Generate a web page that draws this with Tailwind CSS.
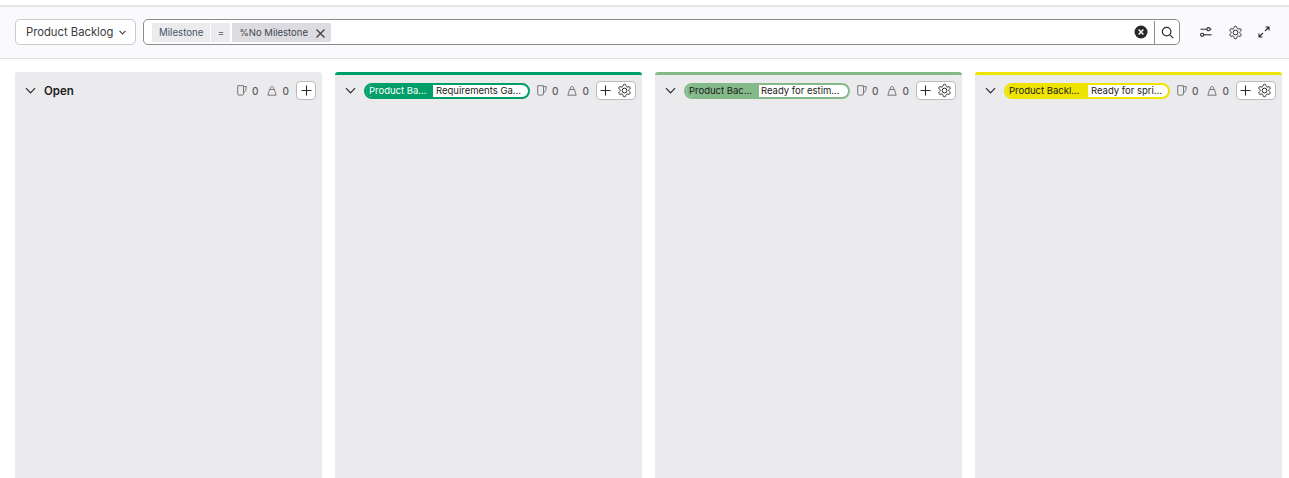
<!DOCTYPE html>
<html lang="en">
<head>
  <meta charset="UTF-8" />
  <title>Backlog board</title>
  <script src="https://cdn.jsdelivr.net/npm/@tailwindcss/browser@4"></script>
</head>
<body class="h-[478px] overflow-hidden bg-white font-['Inter',sans-serif] text-[#2a2a2e]">
  <!-- Toolbar -->
  <div class="mt-[5px] h-[54px] border-t-2 border-[#e3e3e8] bg-[#fafafc]">
    <div class="flex items-center h-[52px] px-[15px] pb-px border-b border-[#dfdfe3]">
      <button class="flex items-center w-[121px] h-[26px] pl-[10px] gap-[6px] bg-white border border-[#c9c9ce] rounded-[5px] text-[11.25px] text-[#3b3b40]">
        Product Backlog
        <svg class="w-[7px] h-[7px]" viewBox="0 0 10 10" fill="none" stroke="#3b3b40" stroke-width="1.6"><path d="M.8 2.8 5 7.2l4.2-4.4"/></svg>
      </button>
      <div class="flex items-center ml-[7px] w-[1037px] h-[26px] pt-px bg-white border border-[#8b8b90] rounded-[5px] pl-2">
        <span class="flex items-center h-[19px] px-[7px] pt-px bg-[#ebebee] rounded-l-[2px] text-[9.7px] text-[#4a5568]">Milestone</span>
        <span class="flex items-center justify-center h-[19px] w-[19px] pt-px ml-px bg-[#ebebee] text-[9.7px] text-[#4a5568]">=</span>
        <span class="flex items-center h-[19px] pl-[7px] pr-[4.5px] pt-px ml-[2px] gap-[7.5px] bg-[#dcdce0] rounded-r-[2px] text-[9.5px] text-[#3f4550]">
          %No Milestone
          <svg class="w-[11px] h-[11px]" viewBox="0 0 11 11" fill="none" stroke="#3b3b40" stroke-width="1.2"><path d="M1.5 1.5l8 8M9.5 1.5l-8 8"/></svg>
        </span>
        <svg class="ml-auto -mt-px w-[14px] h-[14px]" viewBox="0 0 14 14"><circle cx="7" cy="7" r="6.5" fill="#26262b"/><path d="M4.6 4.6l4.8 4.8M9.4 4.6l-4.8 4.8" stroke="#fff" stroke-width="1.4"/></svg>
        <div class="flex items-center justify-center ml-[6px] -mt-px w-[25px] h-full border-l border-[#8b8b90]">
          <svg class="w-[13px] h-[13px]" viewBox="0 0 13 13" fill="none" stroke="#2a2a2e" stroke-width="1.2"><circle cx="5.6" cy="5.6" r="4.3"/><path d="M8.8 8.8l3.4 3.4"/></svg>
        </div>
      </div>
      <div class="flex items-center ml-[20px] gap-[16px]">
        <svg class="w-[12px] h-[12px]" viewBox="0 0 12 12" fill="none" stroke="#2a2a2e" stroke-width="1.1"><circle cx="8.5" cy="3.2" r="1.6"/><path d="M0.5 3.2h6.4M10.1 3.2h1.4"/><circle cx="2.2" cy="8.8" r="1.6"/><path d="M3.8 8.8h7.7"/></svg>
        <svg class="w-[15px] h-[15px]" viewBox="0 0 24 24" fill="none" stroke="#2a2a2e" stroke-width="1.6" stroke-linejoin="round"><path d="M12.22 2h-.44a2 2 0 0 0-2 2v.18a2 2 0 0 1-1 1.73l-.43.25a2 2 0 0 1-2 0l-.15-.08a2 2 0 0 0-2.73.73l-.22.38a2 2 0 0 0 .73 2.73l.15.1a2 2 0 0 1 1 1.72v.51a2 2 0 0 1-1 1.74l-.15.09a2 2 0 0 0-.73 2.73l.22.38a2 2 0 0 0 2.73.73l.15-.08a2 2 0 0 1 2 0l.43.25a2 2 0 0 1 1 1.73V20a2 2 0 0 0 2 2h.44a2 2 0 0 0 2-2v-.18a2 2 0 0 1 1-1.73l.43-.25a2 2 0 0 1 2 0l.15.08a2 2 0 0 0 2.73-.73l.22-.39a2 2 0 0 0-.73-2.73l-.15-.08a2 2 0 0 1-1-1.74v-.5a2 2 0 0 1 1-1.74l.15-.09a2 2 0 0 0 .73-2.73l-.22-.38a2 2 0 0 0-2.73-.73l-.15.08a2 2 0 0 1-2 0l-.43-.25a2 2 0 0 1-1-1.73V4a2 2 0 0 0-2-2z"/><circle cx="12" cy="12" r="3.8"/></svg>
        <svg class="-ml-px w-[12px] h-[12px]" viewBox="0 0 12 12" fill="none" stroke="#2a2a2e" stroke-width="1.1"><path d="M7 5l4-4M7.6 1H11v3.4M5 7l-4 4M1 7.6V11h3.4"/></svg>
      </div>
    </div>
  </div>

  <!-- Board -->
  <div class="flex gap-[13px] pl-[15px] pt-[13px]">
    <section class="w-[307px] h-[420px] bg-[#ebebed] rounded-t-[3px]">
      <div class="flex items-center h-[37px] pl-[10px] pr-[6px]">
        <svg class="w-[11px] h-[11px]" viewBox="0 0 11 11" fill="none" stroke="#2a2a2e" stroke-width="1.2"><path d="M1 3.2l4.5 4.6L10 3.2"/></svg>
        <span class="ml-[8px] pt-[3px] text-[11.5px] font-semibold text-[#1c1c20]">Open</span>
        <div class="ml-auto flex items-center">
          <svg class="w-[10px] h-[11px]" viewBox="0 0 10 11" fill="none" stroke="#77777c" stroke-width="1"><path d="M.7.7h5.8v8.2a1.2 1.2 0 0 1-1.2 1.2H1.9A1.2 1.2 0 0 1 .7 8.9zM6.5 1.6h2.9L8.6 5.5 6.5 8"/></svg>
          <span class="ml-[5px] pt-px text-[10px] font-medium text-[#5c5c62]">0</span>
          <svg class="ml-[8px] w-[10px] h-[11px]" viewBox="0 0 10 11" fill="none" stroke="#77777c" stroke-width="1"><path d="M2.6 4.5h4.8l1.8 5.7H.8zM3.2 4.5c0-4.2 3.6-4.2 3.6 0"/></svg>
          <span class="ml-[6px] pt-px text-[10px] font-medium text-[#5c5c62]">0</span>
          <div class="ml-[7px] flex items-center justify-center w-[20px] h-[19px] bg-white border border-[#b9b9be] rounded-[4px]">
            <svg class="w-[11px] h-[11px]" viewBox="0 0 11 11" stroke="#2a2a2e" stroke-width="1.1"><path d="M5.5 .5v10M.5 5.5h10"/></svg>
          </div>
        </div>
      </div>
    </section>

    <section class="w-[307px] h-[420px] bg-[#ebebed] border-t-[3px] border-[#009e68] rounded-t-[3px]">
      <div class="flex items-center h-[31px] pl-[10px] pr-[6px]">
        <svg class="w-[11px] h-[11px]" viewBox="0 0 11 11" fill="none" stroke="#2a2a2e" stroke-width="1.2"><path d="M1 3.2l4.5 4.6L10 3.2"/></svg>
        <div class="ml-[8px] flex items-center h-[16px] w-[166px] border-2 border-[#009e68] rounded-full overflow-hidden text-[9.5px] bg-white">
          <span class="flex items-center h-full w-[67px] pl-[3px] pt-px bg-[#009e68] text-white whitespace-nowrap">Product Ba...</span>
          <span class="pl-[3px] pt-px whitespace-nowrap text-[#1c1c20]">Requirements Ga...</span>
        </div>
        <div class="ml-auto flex items-center">
          <svg class="w-[10px] h-[11px]" viewBox="0 0 10 11" fill="none" stroke="#77777c" stroke-width="1"><path d="M.7.7h5.8v8.2a1.2 1.2 0 0 1-1.2 1.2H1.9A1.2 1.2 0 0 1 .7 8.9zM6.5 1.6h2.9L8.6 5.5 6.5 8"/></svg>
          <span class="ml-[5px] pt-px text-[10px] font-medium text-[#5c5c62]">0</span>
          <svg class="ml-[8px] w-[10px] h-[11px]" viewBox="0 0 10 11" fill="none" stroke="#77777c" stroke-width="1"><path d="M2.6 4.5h4.8l1.8 5.7H.8zM3.2 4.5c0-4.2 3.6-4.2 3.6 0"/></svg>
          <span class="ml-[6px] pt-px text-[10px] font-medium text-[#5c5c62]">0</span>
          <div class="ml-[7px] flex items-center justify-center gap-[6px] w-[40px] h-[19px] bg-white border border-[#b9b9be] rounded-[4px]">
            <svg class="w-[11px] h-[11px]" viewBox="0 0 11 11" stroke="#2a2a2e" stroke-width="1.1"><path d="M5.5 .5v10M.5 5.5h10"/></svg>
            <svg class="w-[15px] h-[15px]" viewBox="0 0 24 24" fill="none" stroke="#2a2a2e" stroke-width="1.6" stroke-linejoin="round"><path d="M12.22 2h-.44a2 2 0 0 0-2 2v.18a2 2 0 0 1-1 1.73l-.43.25a2 2 0 0 1-2 0l-.15-.08a2 2 0 0 0-2.73.73l-.22.38a2 2 0 0 0 .73 2.73l.15.1a2 2 0 0 1 1 1.72v.51a2 2 0 0 1-1 1.74l-.15.09a2 2 0 0 0-.73 2.73l.22.38a2 2 0 0 0 2.73.73l.15-.08a2 2 0 0 1 2 0l.43.25a2 2 0 0 1 1 1.73V20a2 2 0 0 0 2 2h.44a2 2 0 0 0 2-2v-.18a2 2 0 0 1 1-1.73l.43-.25a2 2 0 0 1 2 0l.15.08a2 2 0 0 0 2.73-.73l.22-.39a2 2 0 0 0-.73-2.73l-.15-.08a2 2 0 0 1-1-1.74v-.5a2 2 0 0 1 1-1.74l.15-.09a2 2 0 0 0 .73-2.73l-.22-.38a2 2 0 0 0-2.73-.73l-.15.08a2 2 0 0 1-2 0l-.43-.25a2 2 0 0 1-1-1.73V4a2 2 0 0 0-2-2z"/><circle cx="12" cy="12" r="3.8"/></svg>
          </div>
        </div>
      </div>
    </section>

    <section class="w-[307px] h-[420px] bg-[#ebebed] border-t-[3px] border-[#84b98a] rounded-t-[3px]">
      <div class="flex items-center h-[31px] pl-[10px] pr-[6px]">
        <svg class="w-[11px] h-[11px]" viewBox="0 0 11 11" fill="none" stroke="#2a2a2e" stroke-width="1.2"><path d="M1 3.2l4.5 4.6L10 3.2"/></svg>
        <div class="ml-[8px] flex items-center h-[16px] w-[166px] border-2 border-[#84b98a] rounded-full overflow-hidden text-[9.5px] bg-white">
          <span class="flex items-center h-full w-[73px] pl-[3px] pt-px bg-[#84b98a] text-[#1c1c20] whitespace-nowrap">Product Bac...</span>
          <span class="pl-[2px] pt-px whitespace-nowrap text-[#1c1c20]">Ready for estim...</span>
        </div>
        <div class="ml-auto flex items-center">
          <svg class="w-[10px] h-[11px]" viewBox="0 0 10 11" fill="none" stroke="#77777c" stroke-width="1"><path d="M.7.7h5.8v8.2a1.2 1.2 0 0 1-1.2 1.2H1.9A1.2 1.2 0 0 1 .7 8.9zM6.5 1.6h2.9L8.6 5.5 6.5 8"/></svg>
          <span class="ml-[5px] pt-px text-[10px] font-medium text-[#5c5c62]">0</span>
          <svg class="ml-[8px] w-[10px] h-[11px]" viewBox="0 0 10 11" fill="none" stroke="#77777c" stroke-width="1"><path d="M2.6 4.5h4.8l1.8 5.7H.8zM3.2 4.5c0-4.2 3.6-4.2 3.6 0"/></svg>
          <span class="ml-[6px] pt-px text-[10px] font-medium text-[#5c5c62]">0</span>
          <div class="ml-[7px] flex items-center justify-center gap-[6px] w-[40px] h-[19px] bg-white border border-[#b9b9be] rounded-[4px]">
            <svg class="w-[11px] h-[11px]" viewBox="0 0 11 11" stroke="#2a2a2e" stroke-width="1.1"><path d="M5.5 .5v10M.5 5.5h10"/></svg>
            <svg class="w-[15px] h-[15px]" viewBox="0 0 24 24" fill="none" stroke="#2a2a2e" stroke-width="1.6" stroke-linejoin="round"><path d="M12.22 2h-.44a2 2 0 0 0-2 2v.18a2 2 0 0 1-1 1.73l-.43.25a2 2 0 0 1-2 0l-.15-.08a2 2 0 0 0-2.73.73l-.22.38a2 2 0 0 0 .73 2.73l.15.1a2 2 0 0 1 1 1.72v.51a2 2 0 0 1-1 1.74l-.15.09a2 2 0 0 0-.73 2.73l.22.38a2 2 0 0 0 2.73.73l.15-.08a2 2 0 0 1 2 0l.43.25a2 2 0 0 1 1 1.73V20a2 2 0 0 0 2 2h.44a2 2 0 0 0 2-2v-.18a2 2 0 0 1 1-1.73l.43-.25a2 2 0 0 1 2 0l.15.08a2 2 0 0 0 2.73-.73l.22-.39a2 2 0 0 0-.73-2.73l-.15-.08a2 2 0 0 1-1-1.74v-.5a2 2 0 0 1 1-1.74l.15-.09a2 2 0 0 0 .73-2.73l-.22-.38a2 2 0 0 0-2.73-.73l-.15.08a2 2 0 0 1-2 0l-.43-.25a2 2 0 0 1-1-1.73V4a2 2 0 0 0-2-2z"/><circle cx="12" cy="12" r="3.8"/></svg>
          </div>
        </div>
      </div>
    </section>

    <section class="w-[307px] h-[420px] bg-[#ebebed] border-t-[3px] border-[#efe300] rounded-t-[3px]">
      <div class="flex items-center h-[31px] pl-[10px] pr-[6px]">
        <svg class="w-[11px] h-[11px]" viewBox="0 0 11 11" fill="none" stroke="#2a2a2e" stroke-width="1.2"><path d="M1 3.2l4.5 4.6L10 3.2"/></svg>
        <div class="ml-[8px] flex items-center h-[16px] w-[166px] border-2 border-[#efe300] rounded-full overflow-hidden text-[9.5px] bg-white">
          <span class="flex items-center h-full w-[82px] pl-[3px] pt-px bg-[#efe300] text-[#1c1c20] whitespace-nowrap">Product Backl...</span>
          <span class="pl-[3px] pt-px whitespace-nowrap text-[#1c1c20]">Ready for spri...</span>
        </div>
        <div class="ml-auto flex items-center">
          <svg class="w-[10px] h-[11px]" viewBox="0 0 10 11" fill="none" stroke="#77777c" stroke-width="1"><path d="M.7.7h5.8v8.2a1.2 1.2 0 0 1-1.2 1.2H1.9A1.2 1.2 0 0 1 .7 8.9zM6.5 1.6h2.9L8.6 5.5 6.5 8"/></svg>
          <span class="ml-[5px] pt-px text-[10px] font-medium text-[#5c5c62]">0</span>
          <svg class="ml-[8px] w-[10px] h-[11px]" viewBox="0 0 10 11" fill="none" stroke="#77777c" stroke-width="1"><path d="M2.6 4.5h4.8l1.8 5.7H.8zM3.2 4.5c0-4.2 3.6-4.2 3.6 0"/></svg>
          <span class="ml-[6px] pt-px text-[10px] font-medium text-[#5c5c62]">0</span>
          <div class="ml-[7px] flex items-center justify-center gap-[6px] w-[40px] h-[19px] bg-white border border-[#b9b9be] rounded-[4px]">
            <svg class="w-[11px] h-[11px]" viewBox="0 0 11 11" stroke="#2a2a2e" stroke-width="1.1"><path d="M5.5 .5v10M.5 5.5h10"/></svg>
            <svg class="w-[15px] h-[15px]" viewBox="0 0 24 24" fill="none" stroke="#2a2a2e" stroke-width="1.6" stroke-linejoin="round"><path d="M12.22 2h-.44a2 2 0 0 0-2 2v.18a2 2 0 0 1-1 1.73l-.43.25a2 2 0 0 1-2 0l-.15-.08a2 2 0 0 0-2.73.73l-.22.38a2 2 0 0 0 .73 2.73l.15.1a2 2 0 0 1 1 1.72v.51a2 2 0 0 1-1 1.74l-.15.09a2 2 0 0 0-.73 2.73l.22.38a2 2 0 0 0 2.73.73l.15-.08a2 2 0 0 1 2 0l.43.25a2 2 0 0 1 1 1.73V20a2 2 0 0 0 2 2h.44a2 2 0 0 0 2-2v-.18a2 2 0 0 1 1-1.73l.43-.25a2 2 0 0 1 2 0l.15.08a2 2 0 0 0 2.73-.73l.22-.39a2 2 0 0 0-.73-2.73l-.15-.08a2 2 0 0 1-1-1.74v-.5a2 2 0 0 1 1-1.74l.15-.09a2 2 0 0 0 .73-2.73l-.22-.38a2 2 0 0 0-2.73-.73l-.15.08a2 2 0 0 1-2 0l-.43-.25a2 2 0 0 1-1-1.73V4a2 2 0 0 0-2-2z"/><circle cx="12" cy="12" r="3.8"/></svg>
          </div>
        </div>
      </div>
    </section>
  </div>
</body>
</html>
